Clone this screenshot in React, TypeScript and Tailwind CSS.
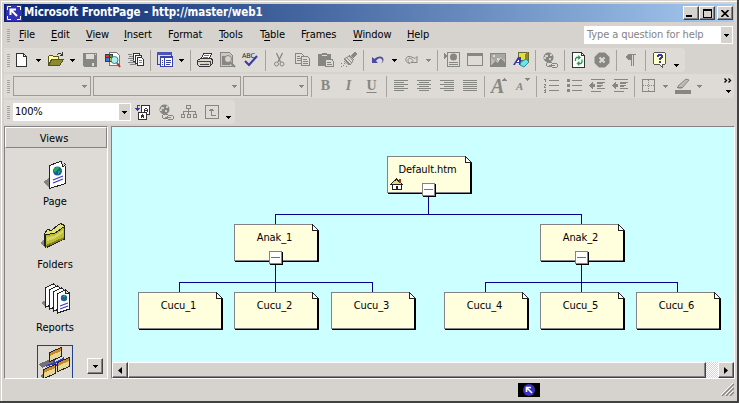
import React from "react";

type Kids = { children?: React.ReactNode };
const G = "#878782";

/* ---------- primitives ---------- */
const Slot = ({ children }: Kids) => (
  <span className="flex h-4 w-[23px] shrink-0 pl-1">
    <svg width="16" height="16" viewBox="0 0 16 16" fill="none" shapeRendering="crispEdges" className="overflow-visible">
      {children}
    </svg>
  </span>
);

const Arrow = ({ off = false, low = false }: { off?: boolean; low?: boolean }) => (
  <span className={`flex w-[11px] shrink-0 justify-center ${low ? "pt-2.5" : ""}`}>
    <svg width="5" height="3" viewBox="0 0 5 3" shapeRendering="crispEdges">
      <path d="M0 0h5v1H4v1H3v1H2V2H1V1H0z" fill={off ? G : "#000"} />
    </svg>
  </span>
);

const Sep = () => (
  <span className="flex w-1.5 shrink-0 justify-center">
    <span className="h-[21px] w-px bg-[#a5a39e]" />
  </span>
);

const Grip = () => (
  <span className="flex w-[3px] shrink-0 flex-col gap-px">
    {Array.from({ length: 7 }, (_, i) => (
      <span key={i} className="h-px w-[3px] bg-[#a5a39e]" />
    ))}
  </span>
);

const Menu = ({ k, pre = "", rest, className }: { k: string; pre?: string; rest: string; className: string }) => (
  <span className={`shrink-0 pt-px tracking-[-0.1px] whitespace-nowrap ${className}`}>
    {pre}
    <span className="underline underline-offset-2">{k}</span>
    {rest}
  </span>
);

const Raised = ({ className, children }: Kids & { className: string }) => (
  <span
    className={`flex shrink-0 items-center justify-center border border-t-white border-l-white border-r-[#424142] border-b-[#424142] bg-[#d6d3ce] shadow-[inset_-1px_-1px_0_#848284] ${className}`}
  >
    {children}
  </span>
);

/* ---------- shared drawings ---------- */
const Lines = ({ rows }: { rows: number[][] }) => (
  <>
    {rows.map(([x, y, w], i) => (
      <rect key={i} x={x} y={y} width={w} height={1} fill={G} />
    ))}
  </>
);

const Globe = () => (
  <>
    <circle cx="6.500" cy="5.500" r="5" fill={G} shapeRendering="auto" />
    <path d="M3 3h3v2H4v2H2V5h1zM8 2h2v2H8zM7 6h2v2H7z" fill="#d0cec9" />
    <rect x="4.500" y="10.500" width="6" height="4" rx="2" fill="#dedbd6" stroke={G} />
    <rect x="9.500" y="11.500" width="6" height="4" rx="2" fill="#dedbd6" stroke={G} />
    <path d="M7 13h6" stroke={G} />
  </>
);

/* ---------- toolbars ---------- */
const StandardBar = () => (
  <div className="flex h-6 w-[681px] items-center rounded-r bg-[#dedbd6] pl-[3px]">
    <Grip />
    <Slot>
      <path d="M2.500 1.500h7l3 3v10h-10z" fill="#fff" stroke="#333" />
      <path d="M9.500 1.500v3h3" stroke="#333" />
    </Slot>
    <Arrow />
    <Slot>
      <path d="M.5 13.500v-9l1-1h3l1 1h5v3" fill="#ffff9c" stroke="#555521" />
      <path d="M.5 13.500l3-6h12l-4 6z" fill="#8c8a31" stroke="#555521" />
      <path d="M9 2.500h1M10 1.500h3M13 2.500h2M14.500 0v4M12 3.500h3" stroke="#333" />
    </Slot>
    <Arrow />
    <Slot>
      <path d="M1 1h14v14H2l-1-1z" fill={G} />
      <path d="M4 2h8v5H4zM10 11h2v3h-2z" fill="#dedbd6" />
      <path d="M13 2h1v1h-1z" fill="#dedbd6" />
    </Slot>
    <Slot>
      <path d="M4.500.5h7l3 3v10h-10z" fill="#fff" stroke="#777" />
      <path d="M0 2h8v8H0z" fill="#393c42" />
      <path d="M1 3h3v2H1z" fill="#d33" />
      <path d="M5 3h2v2H5z" fill="#3a3" />
      <path d="M1 6h3v3H1z" fill="#47c" />
      <path d="M5 6h2v3H5z" fill="#dc3" />
      <circle cx="9.500" cy="8" r="3.500" fill="#a5f3f7" stroke="#4b7985" shapeRendering="auto" />
      <path d="M12 11l3 4" stroke="#b33434" strokeWidth="2" shapeRendering="auto" />
    </Slot>
    <Slot>
      <path d="M5.500 1.500h6v8h-6z" fill="#fff" stroke="#333" />
      <path d="M7.500 3.500h6v8h-6z" fill="#fff" stroke="#333" />
      <path d="M9.500 5.500h4l2 2v6h-6z" fill="#fff" stroke="#333" />
      <path d="M11 8.500h3M11 10.500h3M0 2.500h4M1 4.500h4M0 6.500h5M2 8.500h4M0 10.500h7M2 12.500h6" stroke="#848484" />
    </Slot>
    <Sep />
    <Slot>
      <path d="M.5.5h14v12H.5z" fill="#d6dcf2" stroke="#3942a5" />
      <path d="M0 0h15v3H0z" fill="#4a55b5" />
      <path d="M3.500 4.500h12v10h-12z" fill="#fff" stroke="#3942a5" />
      <path d="M3 4h13v2H3z" fill="#3942a5" />
      <path d="M7.500 6v8M5 8.500h1M5 10.500h1M5 12.500h1M9 8.500h5M9 10.500h5M9 12.500h4" stroke="#3942a5" />
    </Slot>
    <Arrow />
    <Sep />
    <Slot>
      <path d="M4.500 6.500l2-5h8l-2 5z" fill="#fff" stroke="#333" />
      <path d="M7 3.500h5M6 5.500h5" stroke="#777" />
      <path d="M.5 8.500l3-2h11l1 2v3l-3 3h-10l-2-2z" fill="#d9d8ce" stroke="#333" />
      <path d="M1 9.500h12M3 12.500h9M13.500 9v4" stroke="#444" />
      <path d="M8 11h3v1H8z" fill="#dddd31" />
    </Slot>
    <Slot>
      <path d="M.5.5h9l3 3v11H.5z" fill="#cac8c3" stroke={G} />
      <path d="M2 4h8v9H2z" fill={G} />
      <circle cx="8" cy="7" r="3.500" fill="#d6d3ce" stroke={G} shapeRendering="auto" />
      <path d="M10 10l5 5" stroke={G} strokeWidth="2" shapeRendering="auto" />
    </Slot>
    <Slot>
      <text x="-1" y="6" fontSize="6.500" fill="#222" textLength="13" fontFamily="DejaVu Sans">ABC</text>
      <path d="M2 9l4 4 8-9" stroke="#3939a5" strokeWidth="2" shapeRendering="auto" />
    </Slot>
    <Sep />
    <Slot>
      <g stroke={G} shapeRendering="auto">
        <path d="M4.500 1l4 9M10.500 1L6 10" strokeWidth="1.300" />
        <circle cx="4.500" cy="12" r="2" />
        <circle cx="10" cy="12" r="2" />
      </g>
    </Slot>
    <Slot>
      <path d="M.5 1.500h6l2 2v8h-8z" stroke={G} />
      <path d="M6.500 4.500h6l2 2v7h-8z" fill="#dedbd6" stroke={G} />
      <path d="M2 4.500h3M2 6.500h4M2 8.500h4M8 7.500h4M8 9.500h5M8 11.500h5" stroke={G} />
    </Slot>
    <Slot>
      <path d="M0 2h4V1h5v1h4v5h2v8H8v-1H0z" fill={G} />
      <path d="M4 3h5v1H4z" fill="#dedbd6" />
      <path d="M7.500 7.500h6l2 2v5h-8z" fill="#dedbd6" stroke={G} />
      <path d="M9 10.500h4M9 12.500h5" stroke={G} />
    </Slot>
    <Slot>
      <g stroke={G} shapeRendering="auto">
        <path d="M10 4l4-4 2 2-4 4" fill={G} />
        <path d="M8 3l5 5M3 7l5-3 4 5-3 4z" />
        <path d="M4 7l5 5M6 6l5 5M3 9l5 4" />
      </g>
      <path d="M0 11h1v1H0zM2 13h1v1H2zM0 14h1v1H0zM5 14h1v1H5zM3 11h1v1H3z" fill={G} />
    </Slot>
    <Sep />
    <Slot>
      <path d="M2 5v6h6L6 9c2-3 4.500-3.500 6-1.500 1 1.500 0 3-1 4 4-2 3-7-1-7C8 4.500 5.500 5.500 4.500 7z" fill="#4b4ba5" shapeRendering="auto" />
    </Slot>
    <Arrow />
    <Slot>
      <path d="M13 4.500v6H7l2-2C7 5.500 4 5.500 4 8.500c0 1 1 2 2 3-6-1-5-7-1-7 2 0 4 1 6 2z" fill="#dedbd6" stroke={G} shapeRendering="auto" />
    </Slot>
    <Arrow off />
    <Sep />
    <Slot>
      <path d="M0 1l3 3-3 3z" fill={G} />
      <path d="M3.500.5h12v14h-12z" stroke={G} />
      <circle cx="9.500" cy="5" r="3.500" fill={G} shapeRendering="auto" />
      <path d="M5 10.500h9M5 12.500h9" stroke={G} />
    </Slot>
    <Slot>
      <path d="M.5 1.500h15v12H.5z" stroke={G} />
      <path d="M0 1h16v3H0z" fill={G} />
    </Slot>
    <Slot>
      <path d="M.5 1.500h15v13H.5z" fill="#bdbbb6" stroke={G} />
      <path d="M1 2h14v4l-2 2-3-3-4 5-5-4z" fill="#a9a7a2" />
      <path d="M1 14l4-5 3 2 3-5 4 5v3z" fill={G} />
      <path d="M3 3h2v2H3zM7 6l3 1-2 3z" fill="#dedbd6" />
    </Slot>
    <Slot>
      <path d="M5 1l3-1h7v8H5z" fill="#dede42" stroke="#6b6b31" />
      <path d="M12 2l3-2v8l-3 1z" fill="#8c8a31" />
      <path d="M0 13l5-8h3v8H6v-2H3l-1 2z" fill="#3939a5" shapeRendering="auto" />
      <path d="M5 8h1v2H4z" fill="#fff" />
      <path d="M8 10l5-3 3 3-5 5-4-2z" fill="#63e7ef" stroke="#3b8792" shapeRendering="auto" />
    </Slot>
    <Sep />
    <Slot><Globe /></Slot>
    <Sep />
    <Slot>
      <path d="M1.500.5h9l3 3v12h-12z" fill="#fff" stroke="#333" />
      <path d="M10.500.5v3h3" stroke="#333" />
      <g stroke="#219a4a" strokeWidth="1.300" shapeRendering="auto">
        <path d="M4.500 9V7l1-1.500h2.500M11 7.500v2.500l-1 1.500H7" />
        <path d="M7.500 3.500l2 2-2 2zM8 9.500l-2 2 2 2z" fill="#219a4a" strokeWidth=".6" />
      </g>
    </Slot>
    <Slot>
      <path d="M5 .5h6L15.500 5v6L11 15.500H5L.5 11V5z" fill={G} shapeRendering="auto" />
      <path d="M5.500 5.500l5 5m0-5l-5 5" stroke="#dedbd6" strokeWidth="2" shapeRendering="auto" />
    </Slot>
    <Sep />
    <Slot>
      <path d="M5 2h8v1h-2v11h-1V3H9v11H8V8H5L3 6V4z" fill={G} />
    </Slot>
    <Sep />
    <Slot>
      <path d="M2.500.5h10l1 1v10l-1 1h-2v3l-3-3h-5l-1-1v-10z" fill="#ffffc8" stroke="#555" />
      <path d="M5 3h1V2h4v1h1v3h-1v1H9v1H7V6h1V5h1V4H7v1H5zM7 9h2v2H7z" fill="#3939a5" />
    </Slot>
    <Arrow low />
  </div>
);

const OffCombo = ({ className }: { className: string }) => (
  <span className={`flex h-5 shrink-0 items-center justify-end border border-[#9c9a94] ${className}`}>
    <Arrow off />
  </span>
);

const Letter = ({ children, className }: Kids & { className: string }) => (
  <span className={`w-[23px] shrink-0 text-center font-['Liberation_Serif',serif] leading-4 font-bold text-[#878782] ${className}`}>
    {children}
  </span>
);

const Dent = () => (
  <>
    <Lines rows={[[2, 1, 14], [8, 4, 8], [8, 7, 6], [8, 10, 8], [2, 13, 10]]} />
    <path d="M0 7h1V6h1V5h1V4h1v2h2v3H4v2H3v-1H2V9H1V8H0z" fill={G} />
    <path d="M8 4h6v2H8zM8 7h4v2H8z" fill={G} />
  </>
);

const FormatBar = () => (
  <div className="flex h-6 w-[730px] items-center rounded-r bg-[#dedbd6] pl-[3px]">
    <Grip />
    <OffCombo className="ml-[3px] w-[78px]" />
    <OffCombo className="ml-0.5 w-[148px]" />
    <OffCombo className="ml-0.5 w-[65px]" />
    <Sep />
    <Letter className="text-[14px]">B</Letter>
    <Letter className="text-[14px] italic">I</Letter>
    <Letter className="text-[14px] underline underline-offset-2">U</Letter>
    <Sep />
    <Slot><Lines rows={[[1, 2, 14], [1, 4, 10], [1, 6, 14], [1, 8, 10], [1, 10, 14], [1, 12, 10]]} /></Slot>
    <Slot><Lines rows={[[1, 2, 14], [3, 4, 10], [1, 6, 14], [3, 8, 10], [1, 10, 14], [3, 12, 10]]} /></Slot>
    <Slot><Lines rows={[[1, 2, 14], [5, 4, 10], [1, 6, 14], [5, 8, 10], [1, 10, 14], [5, 12, 10]]} /></Slot>
    <Slot><Lines rows={[[1, 2, 14], [1, 4, 14], [1, 6, 14], [1, 8, 14], [1, 10, 14], [1, 12, 14]]} /></Slot>
    <Sep />
    <Slot>
      <text x="0" y="15" fontSize="20" fontWeight="bold" fontStyle="italic" fill={G} fontFamily="Liberation Serif">A</text>
      <path d="M13 0h1v1h1v1h1v1h-5V2h1V1h1z" fill={G} />
    </Slot>
    <Slot>
      <text x="2" y="12" fontSize="11" fontWeight="bold" fontStyle="italic" fill={G} fontFamily="Liberation Serif">A</text>
      <path d="M11 0h5v1h-1v1h-1v1h-1V2h-1V1h-1z" fill={G} />
    </Slot>
    <Sep />
    <Slot>
      <Lines rows={[[6, 2, 10], [6, 7, 10], [6, 12, 10]]} />
      <path d="M1 1h2v3H2V2H1zM1 6h2v2H2v1h1v1H1V8h1V7H1zM1 11h2v4H1v-1h1v-1H1v-1h1z" fill={G} />
    </Slot>
    <Slot>
      <Lines rows={[[6, 2, 10], [6, 7, 10], [6, 12, 10]]} />
      <path d="M1 1h3v3H1zM1 6h3v3H1zM1 11h3v3H1z" fill={G} />
    </Slot>
    <Slot><Dent /></Slot>
    <Slot><Dent /></Slot>
    <Sep />
    <Slot>
      <path d="M1.500 1.500h12v12h-12z" stroke={G} />
      <path d="M7.500 2v11M2 7.500h11" stroke={G} strokeDasharray="1 1" />
    </Slot>
    <Arrow off />
    <Slot>
      <path d="M3 8l8-7 3 1-7 8H3z" fill="#bdbbb6" stroke={G} shapeRendering="auto" />
      <path d="M2 9h5v1H2z" fill={G} />
      <path d="M0 12h16v4H0z" fill={G} />
    </Slot>
    <Arrow off />
    <span className="ml-[17px] flex h-4 w-[15px] flex-col items-center justify-between pb-px">
      <svg width="8" height="5" viewBox="0 0 8 5" fill="none" stroke="#000" strokeWidth="1.300">
        <path d="M.5.5l2 2-2 2M4.500.5l2 2-2 2" />
      </svg>
      <Arrow />
    </span>
  </div>
);

const ZoomBar = () => (
  <div className="flex h-6 w-[231px] items-center rounded-r bg-[#dedbd6] pl-[3px]">
    <Grip />
    <span className="ml-[3px] flex h-[18px] w-[118px] shrink-0 items-center justify-between border border-white bg-white pl-px text-[11px] tracking-[-0.2px]">
      100%
      <span className="flex h-4 w-[11px] items-center bg-[#d6d3ce]"><Arrow /></span>
    </span>
    <Slot>
      <path d="M6.500 1.500h8v9h-8z" fill="#fff" stroke="#333" />
      <path d="M3.500 8.500h8v7h-8z" fill="#fff" stroke="#333" />
      <path d="M9 8V5h1V4h2v1h1v3h-1V7h-2v1zM10 5h2v1h-2zM6 14v-3h1v-1h1v1h1v3H8v-1H7v1z" fill="#333" fillRule="evenodd" />
      <path d="M5 1.500H2.500V6M.5 4l2 2 2-2" stroke="#3939a5" />
    </Slot>
    <Slot><Globe /></Slot>
    <Slot>
      <path d="M5.500 1.500h4v3h-4zM.5 10.500h3v3h-3zM6.500 10.500h3v3h-3zM12.500 10.500h3v3h-3zM7.500 5v5M2 10V7.500h12V10" stroke={G} />
    </Slot>
    <Slot>
      <path d="M1.500 1.500h13v13h-13z" stroke={G} />
      <path d="M7.500 5v6.500H12M5 6.500h5M6 5.500h3" stroke={G} />
    </Slot>
    <Arrow low />
  </div>
);

/* ---------- view icons ---------- */
const PageIcon = () => (
  <svg width="30" height="30" viewBox="0 0 30 30" shapeRendering="crispEdges">
    <path d="M3 22l6-4v10z" fill="#848284" />
    <path d="M9.500 5.500l11-4 5 3v19l-16 5z" fill="#fff" stroke="#222" />
    <path d="M21.500 1.500l1 5 3-1" fill="#d6d3ce" stroke="#222" />
    <circle cx="17.500" cy="11" r="4.500" fill="#1b5d9b" shapeRendering="auto" />
    <path d="M14 8l4-1 2 1-3 2-2 3-1-1zM18 11l3-1-1 3-2 1z" fill="#20a85b" />
    <path d="M13 20l10-4M13 23l10-4" stroke="#3939c5" strokeWidth="1.200" shapeRendering="auto" />
  </svg>
);

const FolderIcon = () => (
  <svg width="30" height="30" viewBox="0 0 30 30" shapeRendering="crispEdges">
    <path d="M0 22l5-4v8z" fill="#848284" />
    <path d="M4.500 12.500l3-4 4 1 6-5 3-2 4 2v13l-17 8.500-3-2z" fill="#e5e577" stroke="#222" />
    <path d="M5.500 13.500l9-1 10-7v12.500l-19 8z" fill="#bdbd39" stroke="#222" />
    <path d="M7 16l7-1 9-6v3l-9 6-7 2z" fill="#d6d65a" />
    <path d="M6 24l18-8v2L6 26z" fill="#858321" />
  </svg>
);

const ReportsIcon = () => (
  <svg width="32" height="32" viewBox="0 0 32 32" shapeRendering="crispEdges">
    <path d="M2 20l5-3v7z" fill="#848284" />
    {["translate(2)", "translate(6 2)", "translate(10 4)", "translate(14 6)"].map((t) => (
      <path key={t} transform={t} d="M4.500 4.500l8-3.500 4 3v16l-12 4z" fill="#fff" stroke="#222" />
    ))}
    <path d="M26.500 7.500v3h4" fill="#ddd" stroke="#222" />
    <circle cx="25" cy="15" r="3.200" fill="#285d95" shapeRendering="auto" />
    <path d="M23 13l4-1-2 3z" fill="#20a85b" />
    <path d="M21 23l8-3M21 26l8-3" stroke="#3939c5" strokeWidth="1.200" shapeRendering="auto" />
  </svg>
);

const NavIcon = () => (
  <svg width="34" height="34" viewBox="0 0 34 34" shapeRendering="crispEdges">
    <path d="M1 18l9-4 6 2-12 6zM2 30l5-3v7z" fill="#737173" />
    <path d="M8 20l9-3 9-5M16 13v5l6 2" fill="none" stroke="#3939c5" strokeWidth="1.500" />
    {["translate(11 1)", "translate(19 11)", "translate(5 18)"].map((t) => (
      <g key={t} transform={t}>
        <path d="M.5 5.500l12-5v9l-12 5z" fill="#e7d794" stroke="#222" />
        <path d="M1 6l11-5v3L1 9z" fill="#c98a24" />
      </g>
    ))}
  </svg>
);

/* ---------- site tree ---------- */
const Page = ({ name, at, home = false }: { name: string; at: string; home?: boolean }) => (
  <div className={`absolute h-[38px] w-[85px] ${at}`}>
    <svg className="absolute inset-0" width="85" height="38" viewBox="0 0 85 38" shapeRendering="crispEdges">
      <path d="M1.500 1v36M1 37.500h83M84.500 7v31" stroke="#000" strokeWidth="1" />
      <path d="M.5.5h78l5 5v31H.5z" fill="#ffffde" stroke="#848284" />
      <path d="M83.500 6v31" stroke="#000" />
      <path d="M78.500.5v5.500h5.500z" fill="#fff" stroke="#222" />
      {home && (
        <g>
          <path d="M5.500 28.500h9v5h-9z" fill="#fff" stroke="#222" />
          <path d="M3.500 28.500l6-5.500 6 5.500z" fill="#e5d784" stroke="#222" />
          <path d="M12 23h2v4h-2z" fill="#9d3421" />
          <path d="M9 30h2v4H9z" fill="#222" />
        </g>
      )}
    </svg>
    <span className="relative block w-[81px] pt-[7px] text-center text-[11px] leading-[14px] tracking-[-0.1px]">{name}</span>
  </div>
);

const Toggle = ({ at }: { at: string }) => (
  <span className={`absolute flex size-[13px] items-center justify-center border border-[#848284] bg-white shadow-[1px_1px_0_#000] ${at}`}>
    <span className="h-px w-[9px] bg-[#737173]" />
  </span>
);

const SiteTree = () => (
  <div className="relative h-[235px] overflow-hidden bg-[#ccffff]">
    <svg className="absolute inset-0" width="622" height="235" viewBox="112 127 622 235" shapeRendering="crispEdges">
      <path
        d="M428.500 194v20M275.500 224v-9.500h306v9.500M275.500 262v30M179.500 292v-9.500h193v9.500M581.500 262v30M485.500 292v-9.500h192v9.500"
        fill="none"
        stroke="#00008c"
      />
    </svg>
    <Page name="Default.htm" at="left-[275px] top-[29px]" home />
    <Page name="Anak_1" at="left-[122px] top-[97px]" />
    <Page name="Anak_2" at="left-[428px] top-[97px]" />
    <Page name="Cucu_1" at="left-[26px] top-[165px]" />
    <Page name="Cucu_2" at="left-[122px] top-[165px]" />
    <Page name="Cucu_3" at="left-[219px] top-[165px]" />
    <Page name="Cucu_4" at="left-[332px] top-[165px]" />
    <Page name="Cucu_5" at="left-[428px] top-[165px]" />
    <Page name="Cucu_6" at="left-[524px] top-[165px]" />
    <Toggle at="left-[310px] top-[56px]" />
    <Toggle at="left-[157px] top-[124px]" />
    <Toggle at="left-[463px] top-[124px]" />
  </div>
);

export default function App() {
  return (
    <div className="h-[403px] w-[739px] overflow-hidden border-r-2 border-b-2 border-[#424142] bg-[#d6d3ce] font-['DejaVu_Sans_Condensed','DejaVu_Sans',sans-serif] text-[11px] text-black">
      <div className="flex h-[401px] w-[737px] flex-col border-t border-l border-[#d6d3ce]">
        <div className="flex h-[400px] flex-col border-t border-l border-white pt-0.5 pl-0.5">
          {/* title */}
          <div className="flex h-[18px] w-[730px] shrink-0 items-center bg-linear-to-r from-[#0a246a] to-[#a6caf0] pl-0.5 text-[12px] font-bold text-white">
            <svg width="16" height="16" viewBox="0 0 16 16" className="mr-0.5" fill="none" stroke="#fff">
              <path d="M0 0h16v16H0z" fill="#3131b5" stroke="none" />
              <path d="M1.500 5V1.500H5M11 1.500h3.500V5M14.500 11v3.500H11M5 14.500H1.500V11" />
              <path d="M4.500 10V4.500H10M5 5l6 6" strokeWidth="2" />
            </svg>
            <span className="text-[11.500px] tracking-[-0.08px] whitespace-nowrap">Microsoft FrontPage - http://master/web1</span>
            <span className="ml-auto flex pr-px">
              <Raised className="h-3.5 w-4"><span className="mt-1.5 mr-1 h-0.5 w-1.5 bg-black" /></Raised>
              <Raised className="h-3.5 w-4"><span className="h-[9px] w-[9px] border border-t-2 border-black" /></Raised>
              <Raised className="ml-0.5 h-3.5 w-4">
                <svg width="8" height="7" viewBox="0 0 8 7" stroke="#000" strokeWidth="1.600"><path d="M.5 0l7 7m0-7l-7 7" /></svg>
              </Raised>
            </span>
          </div>
          {/* menu */}
          <div className="flex h-[26px] shrink-0 items-center pl-[3px]">
            <Grip />
            <Menu k="F" rest="ile" className="ml-[9px] w-8" />
            <Menu k="E" rest="dit" className="w-[35px]" />
            <Menu k="V" rest="iew" className="w-[38px]" />
            <Menu k="I" rest="nsert" className="w-11" />
            <Menu pre="F" k="o" rest="rmat" className="w-[51px]" />
            <Menu k="T" rest="ools" className="w-[41px]" />
            <Menu pre="T" k="a" rest="ble" className="w-[41px]" />
            <Menu pre="F" k="r" rest="ames" className="w-[52px]" />
            <Menu k="W" rest="indow" className="w-[54px]" />
            <Menu k="H" rest="elp" className="w-[40px]" />
            <span className="ml-auto mr-1 flex h-[18px] w-[149px] items-center justify-between border border-white bg-white pl-0.5 text-[#848284]">
              <span className="tracking-[-0.1px] whitespace-nowrap">Type a question for help</span>
              <span className="flex h-4 w-[11px] items-center bg-[#d6d3ce]"><Arrow /></span>
            </span>
          </div>
          <div className="flex shrink-0 flex-col gap-0.5">
            <StandardBar />
            <FormatBar />
            <ZoomBar />
          </div>
          {/* workspace */}
          <div className="mt-0.5 flex h-[253px] shrink-0">
            <div className="flex w-[104px] shrink-0 flex-col border border-t-[#848284] border-r-white border-b-white border-l-[#848284] bg-[#dedbd6]">
              <div className="h-[21px] shrink-0 border border-t-white border-r-[#848284] border-b-[#848284] border-l-white bg-[#d6d3ce] pr-1 text-center leading-[21px]">
                Views
              </div>
              <div className="flex h-[230px] overflow-hidden">
                <div className="ml-[17px] flex w-[66px] flex-col items-center leading-[14px]">
                  <span className="mt-3"><PageIcon /></span>
                  <span className="mt-[5px]">Page</span>
                  <span className="mt-3"><FolderIcon /></span>
                  <span className="mt-[7px]">Folders</span>
                  <span className="mt-[11px]"><ReportsIcon /></span>
                  <span className="mt-1.5">Reports</span>
                  <span className="mt-2.5 flex size-9 shrink-0 border border-[#21418c]"><NavIcon /></span>
                </div>
                <Raised className="-ml-px mb-1 h-4 w-4 self-end"><Arrow /></Raised>
              </div>
            </div>
            <div className="ml-[3px] flex w-[624px] flex-col border border-t-[#848284] border-r-white border-b-white border-l-[#848284]">
              <SiteTree />
              <div className="flex h-4 bg-[#ebe9e6]">
                <Raised className="h-4 w-4">
                  <svg width="4" height="7" viewBox="0 0 4 7"><path d="M4 0v7L0 3.500z" /></svg>
                </Raised>
                <Raised className="h-4 w-[578px]" />
                <span className="flex-1 bg-[conic-gradient(#d6d3ce_25%,#fff_0_50%,#d6d3ce_0_75%,#fff_0)] bg-size-[2px_2px]" />
                <Raised className="h-4 w-4">
                  <svg width="4" height="7" viewBox="0 0 4 7"><path d="M0 0v7l4-3.500z" /></svg>
                </Raised>
              </div>
            </div>
          </div>
          {/* status */}
          <div className="flex flex-1 items-center justify-between pl-[514px]">
            <span className="flex h-3.5 w-[22px] items-center justify-center bg-black">
              <svg width="12" height="12" viewBox="0 0 12 12" fill="none">
                <circle cx="6" cy="6" r="6" fill="#3931bd" />
                <path d="M3.500 8V3.500H8M4 4l5 5" stroke="#fff" strokeWidth="1.600" />
              </svg>
            </span>
            <svg width="13" height="13" viewBox="0 0 13 13" className="mr-[3px] mb-px">
              <path d="M0 12L12 0M4 12l8-8M8 12l4-4" stroke="#fff" />
              <path d="M1 13L13 1M5 13l8-8M9 13l4-4" stroke="#848284" strokeWidth="1.400" />
            </svg>
          </div>
        </div>
      </div>
    </div>
  );
}
